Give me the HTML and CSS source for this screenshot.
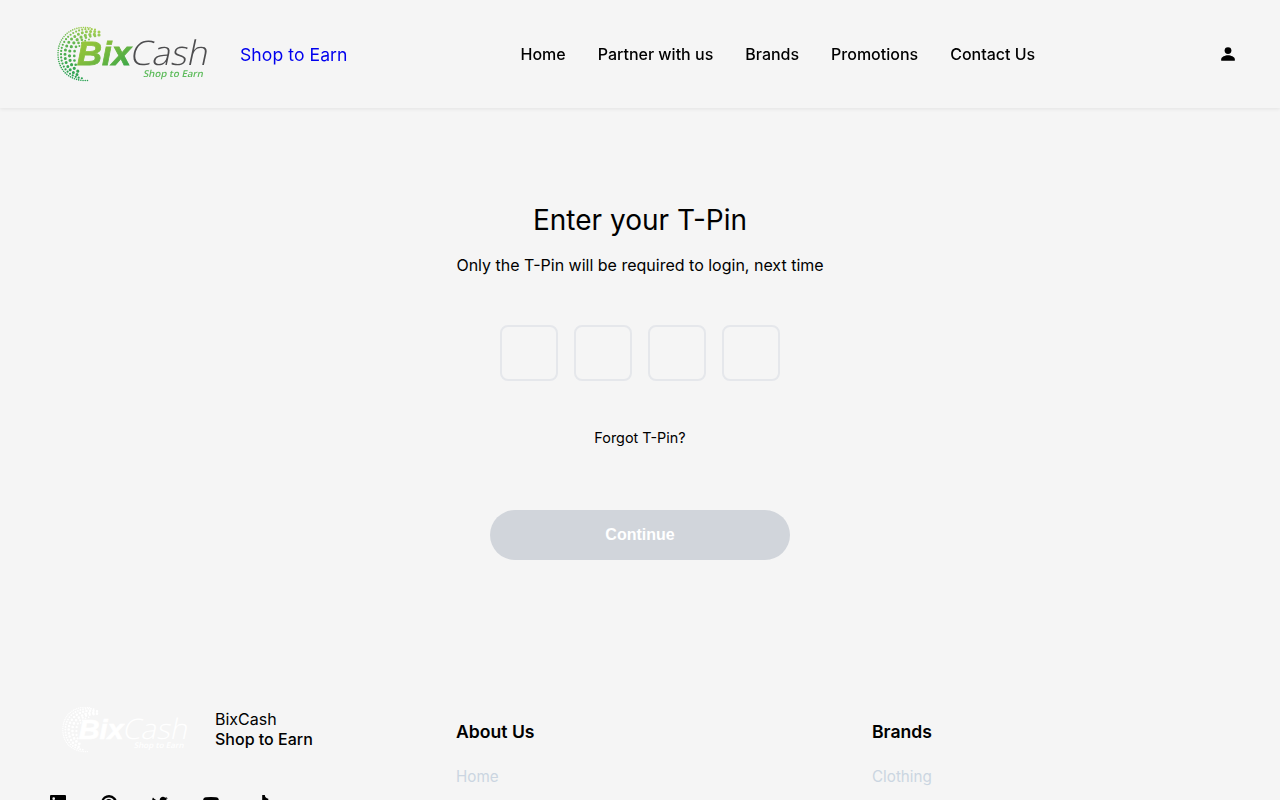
FILE: index.html
```html
<!DOCTYPE html>
<html lang="en">
<head>
<meta charset="utf-8">
<title>BixCash</title>
<link rel="stylesheet" href="styles.css">
</head>
<body>
<svg class="defs" aria-hidden="true">
  <defs>
    <linearGradient id="lime" x1="0" y1="0" x2="1" y2="1"><stop offset="0" stop-color="#a4cc3a"/><stop offset=".4" stop-color="#83bd3c"/><stop offset="1" stop-color="#2ba24b"/></linearGradient>
    <linearGradient id="leaf" gradientUnits="userSpaceOnUse" x1="28" y1="0" x2="10" y2="50"><stop offset="0" stop-color="#a5cf55"/><stop offset=".4" stop-color="#5fb550"/><stop offset="1" stop-color="#26a052"/></linearGradient>
    <symbol id="globe" viewBox="0 0 50 56">
      <g fill="none" stroke-linecap="round">
        <path d="M33 1.300C15-1.500 1 10 1 27.500S14 55 31 54" stroke-width="1.600" stroke-dasharray="0 2.200"/>
        <path d="M38 3C18 0 4 12 4 27.500s10 24 24 24.500" stroke-width="2.200" stroke-dasharray="0 3.200"/>
        <path d="M42 5.500C22 2 8 14 8 27.500S15 47 24 49.500" stroke-width="3" stroke-dasharray="0 4.200"/>
        <path d="M42 8.500C26 5 12.500 16 12.500 27.500S17 42 22 45.500" stroke-width="3.200" stroke-dasharray="0 4.600"/>
        <path d="M38 9.500C27 9 17.500 17 17.300 27.500s1 10 3 13" stroke-width="2.700" stroke-dasharray="0 4.600"/>
        <path d="M32 13C26 14 22.500 18 21 23" stroke-width="2" stroke-dasharray="0 4"/>
      </g>
    </symbol>
  </defs>
</svg>

<header class="header">
  <a class="brand" href="#">
    <svg class="logo" viewBox="0 0 150 56">
      <use class="logo-globe" href="#globe" y=".5" width="50" height="56"/>
      <text class="logo-bix" x="20" y="39" textLength="54" lengthAdjust="spacingAndGlyphs">Bix</text>
      <text class="logo-cash" transform="translate(72 39) skewX(-12)" textLength="78" lengthAdjust="spacingAndGlyphs">Cash</text>
      <text class="logo-tag" transform="translate(86 50.500) skewX(-12)" textLength="60" lengthAdjust="spacingAndGlyphs">Shop to Earn</text>
    </svg>
    <span class="brand-name">Shop to Earn</span>
  </a>
  <nav class="nav">
    <a href="#">Home</a><a href="#">Partner with us</a><a href="#">Brands</a><a href="#">Promotions</a><a href="#">Contact Us</a>
  </nav>
  <svg class="user" viewBox="0 0 14 14"><circle cx="7" cy="3.600" r="3.400"/><path d="M.2 13.800v-1.600C.2 9.900 4.200 8.300 7 8.300s6.800 1.600 6.800 3.900v1.600z"/></svg>
</header>

<main class="main">
  <h1>Enter your T-Pin</h1>
  <p class="hint">Only the T-Pin will be required to login, next time</p>
  <div class="pins"><input aria-label="Digit 1"><input aria-label="Digit 2"><input aria-label="Digit 3"><input aria-label="Digit 4"></div>
  <a class="forgot" href="#">Forgot T-Pin?</a>
  <button class="continue">Continue</button>
</main>

<footer class="footer">
  <section class="about">
    <div class="about-brand">
      <svg class="logo logo-white" viewBox="0 0 150 56">
        <use class="logo-globe" href="#globe" y=".5" width="50" height="56"/>
        <text class="logo-bix" x="20" y="39" textLength="54" lengthAdjust="spacingAndGlyphs">Bix</text>
        <text class="logo-cash" transform="translate(72 39) skewX(-12)" textLength="78" lengthAdjust="spacingAndGlyphs">Cash</text>
        <text class="logo-tag" transform="translate(86 50.500) skewX(-12)" textLength="60" lengthAdjust="spacingAndGlyphs">Shop to Earn</text>
      </svg>
      <div class="about-name"><span>BixCash</span><strong>Shop to Earn</strong></div>
    </div>
    <div class="social">
      <svg viewBox="0 0 16 16"><path fill-rule="evenodd" d="M1 0h14a1 1 0 0 1 1 1v14a1 1 0 0 1-1 1H1a1 1 0 0 1-1-1V1a1 1 0 0 1 1-1zm1.500 6v7.500h2.300V6zM3.700 2.300a1.300 1.300 0 1 0 0 2.700 1.300 1.300 0 0 0 0-2.700zM6.300 6v7.500h2.300V9.700c0-2.200 2.500-2.200 2.500 0v3.800h2.400V9c0-3.400-3.600-3.800-4.900-1.800V6z"/></svg>
      <svg viewBox="0 0 16 16"><path d="M8 0a8 8 0 0 0-3 15.400c0-.6 0-1.500.2-2.200l1-4.300s-.3-.5-.3-1.300c0-2.600 3-2.800 3-.9 0 1.100-.7 2-.9 3.400-.2 2.200 3.500 1.600 3.500-2.400 0-2.300-1.500-3.600-3.700-3.600-3.500 0-4.800 3.600-3.300 5.600l-.3 1.200C.9 9.900 1.500 2.500 8 2.500c7 0 7 9.600 1.700 9.600-1 0-1.800-.5-2.100-1.100-.4 1.400-.6 3-1.700 4.700A8 8 0 1 0 8 0z"/></svg>
      <svg viewBox="0 0 16 16"><path d="M16 3l-1.700 1.600C14.600 11 10 15 5 15c-2 0-3.700-.6-5-1.500 1.800.2 3.500-.3 4.800-1.300-1.500 0-2.700-1-3-2.300h1.400A3.300 3.300 0 0 1 .6 6.700l1.400.4A3.300 3.300 0 0 1 1 2.500c1.700 2 4 3.300 6.800 3.400C7 2.700 10.700.4 13.300 2.700l2-.8-1.300 1.700z"/></svg>
      <svg viewBox="0 0 16 16"><path fill-rule="evenodd" d="M3 2.200q5-.4 10 0c2.500.2 3 1.500 3 5.800s-.5 5.600-3 5.800q-5 .4-10 0C.5 13.600 0 12.300 0 8s.5-5.600 3-5.800zM6.400 5.500v5L10.700 8z"/></svg>
      <svg viewBox="0 0 16 16"><path d="M8.200 0h2.600c.2 2 1.400 3.500 3.500 3.800v2.600c-1.300 0-2.500-.4-3.500-1.100V11c0 6-9 6.500-9 .3 0-3.200 2.700-5.200 5.500-4.700v2.800C3.700 8.700 3.500 13.200 6.200 13.200c1.300 0 2-1 2-2.200z"/></svg>
    </div>
  </section>
  <section class="links"><h2>About Us</h2><a href="#">Home</a></section>
  <section class="links"><h2>Brands</h2><a href="#">Clothing</a></section>
</footer>
</body>
</html>
```
FILE: styles.css
```css
* { box-sizing: border-box; }
body { margin: 0; height: 800px; overflow: hidden; background: #f5f5f5; color: #000; font-family: Inter, sans-serif; font-size: 16px; }
a { color: inherit; text-decoration: none; }
h1, h2, p { margin: 0; font-weight: 400; }
.defs { position: absolute; width: 0; height: 0; }

.header { height: 108px; display: grid; grid-template-columns: 480px 1fr auto; align-items: center; padding: 0 45px 0 57px; box-shadow: 0 1px 4px rgba(0, 0, 0, .08); will-change: transform; }
.brand { display: flex; align-items: center; gap: 33px; }
.logo { width: 150px; height: 56px; overflow: visible; display: block; }
.logo-globe { stroke: url(#leaf); }
.logo .logo-bix { font-family: "Liberation Sans", sans-serif; font-size: 34px; font-style: italic; font-weight: 700; fill: url(#lime); stroke: url(#lime); stroke-width: .8px; }
.logo .logo-cash { font-family: "Open Sans", sans-serif; font-size: 34px; font-weight: 300; fill: #4d4d4f; }
.logo .logo-tag { font-family: "Open Sans", sans-serif; font-size: 9.500px; font-weight: 600; fill: #5dbb5b; }
.brand-name { color: #0000ee; font-size: 17.600px; letter-spacing: .06px; }
.nav { display: flex; gap: 32px; margin-left: -16.500px; font-weight: 500; white-space: nowrap; }
.user { width: 14px; height: 14px; }

.main { height: 598px; padding-top: 94px; display: flex; flex-direction: column; align-items: center; }
h1 { font-size: 28px; line-height: 36px; }
.hint { margin-top: 17px; line-height: 20px; }
.pins { display: flex; gap: 16px; margin-top: 50px; }
.pins input { width: 58px; height: 56px; border: 2px solid #e5e7eb; border-radius: 8px; background: transparent; padding: 0; }
.forgot { margin-top: 47px; font-size: 14.400px; line-height: 20px; }
.continue { margin-top: 62px; width: 300px; height: 50px; border: 0; border-radius: 25px; background: #d1d5db; color: #fff; font: bold 16px "Liberation Sans", sans-serif; }

.footer { display: grid; grid-template-columns: 406px 416px 1fr; padding-left: 50px; }
.about-brand { display: flex; gap: 28px; padding-left: 12px; height: 89px; }
.logo-white { width: 125px; height: 47px; }
.logo-white .logo-globe { stroke: #fff; }
.logo.logo-white text { fill: #fff; }
.logo.logo-white .logo-bix { stroke: #fff; }
.about-name { display: flex; flex-direction: column; padding-top: 3px; line-height: 20px; }
.about-name strong { font-weight: 500; }
.social { display: flex; gap: 35px; }
.social svg { width: 16px; height: 16px; }
.links { display: flex; flex-direction: column; padding-top: 14px; }
.links h2 { font-size: 17.600px; font-weight: 600; line-height: 24px; }
.links a { margin-top: 23px; font-size: 15.200px; line-height: 20px; color: #cbd5e1; }
```
